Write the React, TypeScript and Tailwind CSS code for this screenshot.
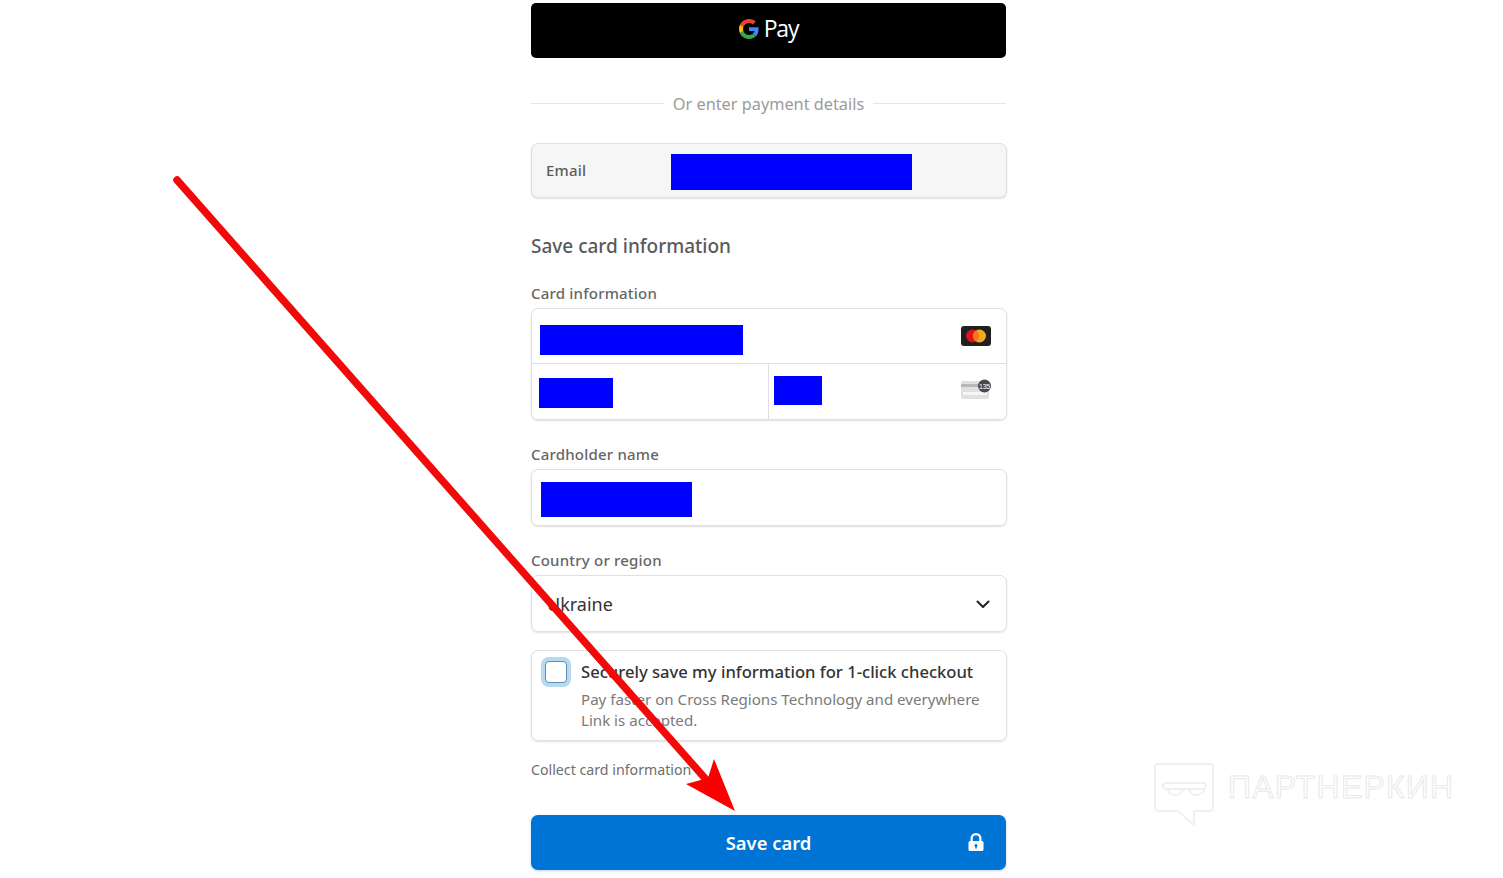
function GoogleG() {
    return (
        <svg width="20" height="20" viewBox="0 0 48 48">
            <path fill="#EA4335" d="M24 9.5c3.54 0 6.71 1.22 9.21 3.6l6.85-6.85C35.9 2.38 30.47 0 24 0 14.62 0 6.51 5.38 2.56 13.22l7.98 6.19C12.43 13.72 17.74 9.5 24 9.5z" />
            <path fill="#4285F4" d="M46.98 24.55c0-1.57-.15-3.09-.38-4.55H24v9.02h12.94c-.58 2.96-2.26 5.48-4.78 7.18l7.73 6c4.51-4.18 7.09-10.36 7.09-17.65z" />
            <path fill="#FBBC05" d="M10.53 28.59c-.48-1.45-.76-2.99-.76-4.59s.27-3.14.76-4.59l-7.98-6.19C.92 16.46 0 20.12 0 24c0 3.88.92 7.54 2.56 10.78l7.97-6.19z" />
            <path fill="#34A853" d="M24 48c6.48 0 11.93-2.13 15.89-5.81l-7.73-6c-2.15 1.45-4.92 2.3-8.16 2.3-6.26 0-11.57-4.22-13.47-9.91l-7.98 6.19C6.51 42.62 14.62 48 24 48z" />
        </svg>
    );
}

function MastercardIcon() {
    return (
        <svg width="30" height="20" viewBox="0 0 30 20">
            <rect width="30" height="20" rx="3" fill="#1f1f1f" />
            <circle cx="11.5" cy="10" r="6.5" fill="#d8141c" />
            <circle cx="18.5" cy="10" r="6.5" fill="#f5a623" />
            <path d="M15 4.500a6.500 6.500 0 0 1 0 11a6.500 6.500 0 0 1 0-11z" fill="#ef7a14" />
        </svg>
    );
}

function CvcIcon() {
    return (
        <svg width="32" height="22" viewBox="0 0 32 22">
            <rect x="1" y="2" width="28" height="18" rx="2" fill="#e0e0e0" />
            <rect x="1" y="5" width="28" height="3" fill="#b8b8b8" />
            <rect x="3" y="13" width="24" height="3" fill="#f6f6f6" />
            <circle cx="24.5" cy="7" r="6.500" fill="#4a4a4a" />
            <text x="24.500" y="9.500" textAnchor="middle" fontSize="7" letterSpacing="-0.3" fill="#ffffff" fontFamily="Liberation Sans">135</text>
        </svg>
    );
}

function RedArrow() {
    return (
        <svg className="absolute left-0 top-0 pointer-events-none" width="1503" height="878" viewBox="0 0 1503 878">
            <line x1="177" y1="180" x2="710" y2="784" stroke="#f20a0a" strokeWidth="7.5" strokeLinecap="round" />
            <polygon points="735,811 686,784 708,778 714,759" fill="#fb0000" />
        </svg>
    );
}

function Watermark() {
    return (
        <div className="absolute left-[1154px] top-[763px] flex items-start gap-[14px] pointer-events-none">
            <svg width="60" height="64" viewBox="0 0 60 64" fill="none" stroke="#ececec" strokeWidth="1.5">
                <path d="M4 1h52a3 3 0 0 1 3 3v41a3 3 0 0 1-3 3H40v14L24 48H4a3 3 0 0 1-3-3V4a3 3 0 0 1 3-3z" />
                <rect x="9" y="20" width="43" height="6" rx="3" />
                <path d="M14 26c0 8 14 8 15 0M35 26c1 8 14 8 15 0" />
            </svg>
            <span className="mt-[9px] text-[32px] leading-[30px] tracking-[1.2px] font-['Liberation_Sans'] text-transparent [-webkit-text-stroke:1px_#e9e9e9]">
                ПАРТНЕРКИН
            </span>
        </div>
    );
}

const boxShadow = "border border-[#e0e0e0] rounded-[7px] shadow-[0_1px_2px_rgba(0,0,0,0.12)]";
const fieldLabel = "text-[15px] leading-[20px] tracking-[0.2px] font-medium text-[#666666]";

export default function App() {
    return (
        <div className="relative w-[1503px] h-[878px] overflow-hidden bg-white font-['Noto_Sans',sans-serif]">
            <div className="w-[476px] ml-[531px] pt-[3px] flex flex-col">
                <div className="w-[475px] h-[55px] pb-[4px] bg-black rounded-[5px] flex items-center justify-center gap-[5px]">
                    <GoogleG />
                    <span className="text-white text-[23px] leading-none font-['Open_Sans',sans-serif] tracking-[-1.2px]">Pay</span>
                </div>

                <div className="w-[475px] mt-[35px] h-[20px] flex items-center gap-[9px]">
                    <div className="flex-1 h-px bg-[#e6e6e6]" />
                    <span className="pt-[1px] text-[16.3px] leading-[20px] text-[#9b9b9b]">Or enter payment details</span>
                    <div className="flex-1 h-px bg-[#e6e6e6]" />
                </div>

                <div className={`mt-[30px] h-[55px] bg-[#f6f6f6] flex items-center pl-[14px] ${boxShadow}`}>
                    <span className="w-[125px] text-[15px] tracking-[0.2px] font-medium text-[#5c5c5c]">Email</span>
                    <div className="w-[241px] h-[36px] mt-[2px] bg-[#0000ff]" />
                </div>

                <h2 className="mt-[36px] text-[19px] leading-[24px] font-medium text-[#5a5a5a]">Save card information</h2>

                <label className={`mt-[25px] ${fieldLabel}`}>Card information</label>
                <div className={`mt-[5px] h-[112px] flex flex-col ${boxShadow}`}>
                    <div className="h-[55px] flex items-center justify-between pl-[8px] pr-[15px] border-b border-[#e0e0e0]">
                        <div className="w-[203px] h-[30px] mt-[8px] bg-[#0000ff]" />
                        <div className="flex"><MastercardIcon /></div>
                    </div>
                    <div className="flex-1 flex">
                        <div className="w-[237px] border-r border-[#e0e0e0] pl-[7px] pt-[14px]">
                            <div className="w-[74px] h-[30px] bg-[#0000ff]" />
                        </div>
                        <div className="flex-1 flex justify-between pl-[5px] pr-[14px] pt-[12px]">
                            <div className="w-[48px] h-[29px] bg-[#0000ff]" />
                            <div className="mt-[3px] flex h-[22px]"><CvcIcon /></div>
                        </div>
                    </div>
                </div>

                <label className={`mt-[24px] ${fieldLabel}`}>Cardholder name</label>
                <div className={`mt-[5px] h-[57px] flex items-center pl-[9px] ${boxShadow}`}>
                    <div className="w-[151px] h-[35px] mt-[3px] bg-[#0000ff]" />
                </div>

                <label className={`mt-[24px] ${fieldLabel}`}>Country or region</label>
                <div className={`mt-[5px] h-[57px] flex items-center justify-between pl-[15px] pr-[15px] ${boxShadow}`}>
                    <span className="pt-[1px] text-[18px] text-[#333333]">Ukraine</span>
                    <svg width="16" height="16" viewBox="0 0 16 16" fill="none" stroke="#222222" strokeWidth="2" strokeLinecap="round" strokeLinejoin="round">
                        <path d="M2.500 5.500 8 11l5.500-5.500" />
                    </svg>
                </div>

                <div className={`mt-[18px] h-[91px] flex pl-[13px] pr-[10px] pt-[10px] ${boxShadow}`}>
                    <div className="w-[22px] h-[22px] shrink-0 bg-white border border-[#5f8fb0] rounded-[4px] ring-[4px] ring-[#b5daf0]" />
                    <div className="ml-[14px] flex flex-col">
                        <span className="text-[16.6px] leading-[22px] font-medium text-[#333333] whitespace-nowrap">Securely save my information for 1-click checkout</span>
                        <span className="mt-[6px] text-[15.1px] leading-[21px] text-[#7a7a7a]">Pay faster on Cross Regions Technology and everywhere Link is accepted.</span>
                    </div>
                </div>

                <p className="mt-[19px] text-[14.2px] leading-[20px] text-[#6e6e6e]">Collect card information</p>

                <div className="relative w-[475px] mt-[35px] h-[55px] pt-[1px] bg-[#0074d4] rounded-[7px] flex items-center justify-center shadow-[0_1px_3px_rgba(0,100,200,0.25)]">
                    <span className="text-white text-[18.4px] font-semibold">Save card</span>
                    <svg className="absolute right-[21px] top-[17px]" width="18" height="20" viewBox="0 0 18 20">
                        <path fill="#ffffff" fillRule="evenodd" d="M9 1a5.500 5.500 0 0 0-5.500 5.500V9H3a1.500 1.500 0 0 0-1.500 1.500v7A1.500 1.500 0 0 0 3 19h12a1.500 1.500 0 0 0 1.500-1.500v-7A1.500 1.500 0 0 0 15 9h-.5V6.500A5.500 5.500 0 0 0 9 1zm3.200 8V6.500a3.200 3.200 0 0 0-6.400 0V9zM9 12a1.500 1.500 0 0 1 .7 2.800V16.500H8.300V14.800A1.500 1.500 0 0 1 9 12z" />
                    </svg>
                </div>
            </div>
            <RedArrow />
            <Watermark />
        </div>
    );
}
